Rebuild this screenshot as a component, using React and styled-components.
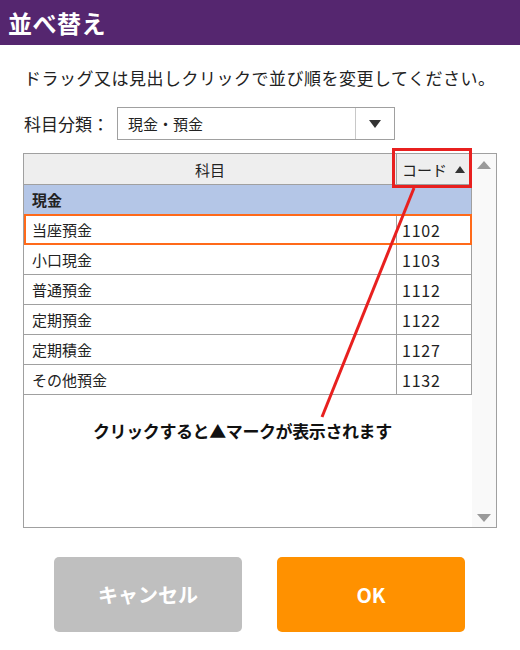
import React from "react";
import styled, { createGlobalStyle } from "styled-components";

const GlobalStyle = createGlobalStyle`
  body {
    margin: 0;
    background: #fff;
    font-family: "Noto Sans CJK JP", "Noto Sans", sans-serif;
    color: #222;
  }
`;

const Page = styled.div`
  position: relative;
  width: 520px;
  height: 650px;
  overflow: hidden;
`;

const TitleBar = styled.div`
  height: 45px;
  background: #55266f;
  display: flex;
  align-items: center;
  padding-left: 8px;

  h1 {
    margin: 0;
    color: #fff;
    font-size: 24px;
    font-weight: 700;
    line-height: 1;
    letter-spacing: 0.5px;
  }
`;

const Body = styled.div`
  padding: 0 24px 0 23px;
`;

const Lead = styled.p`
  margin: 0;
  padding: 21px 0 0 1px;
  font-size: 17px;
  line-height: 24px;
  letter-spacing: 0.5px;
  color: #222;
`;

const FilterRow = styled.div`
  display: flex;
  align-items: center;
  margin-top: 17px;
  padding-left: 1px;

  label {
    width: 93px;
    font-size: 17px;
    color: #222;
  }
`;

const Select = styled.div`
  width: 276px;
  height: 31px;
  border: 1px solid #a0a0a0;
  display: flex;
  align-items: stretch;

  span {
    flex: 1;
    display: flex;
    align-items: center;
    padding-left: 10px;
    font-size: 15px;
  }

  i {
    width: 38px;
    border-left: 1px solid #c8c8c8;
    display: flex;
    align-items: center;
    justify-content: center;
  }
`;

const ListBox = styled.div`
  margin-top: 13px;
  width: 472px;
  height: 373px;
  border: 1px solid #a0a0a0;
  display: flex;
`;

const Grid = styled.div`
  width: 448px;
  display: flex;
  flex-direction: column;
`;

const Row = styled.div`
  display: grid;
  grid-template-columns: 372px 76px;
  height: ${(p) => p.$h || 30}px;
  background: ${(p) => p.$bg || "#fff"};
  box-sizing: border-box;
  border-bottom: 1px solid #a0a0a0;
  position: relative;
`;

const Cell = styled.div`
  display: flex;
  align-items: center;
  justify-content: ${(p) => (p.$center ? "center" : "flex-start")};
  padding-left: ${(p) => (p.$center ? 0 : p.$divide ? 5 : 8)}px;
  font-size: 15px;
  font-weight: ${(p) => (p.$bold ? 700 : 400)};
  color: #222;
  border-right: ${(p) => (p.$last ? "1px solid #a0a0a0" : "none")};
  border-left: ${(p) => (p.$divide ? "1px solid #a0a0a0" : "none")};
  gap: 8px;
`;

const Code = styled.span`
  font-size: 16px;
  letter-spacing: 0.8px;
`;

const SelectedFrame = styled.div`
  position: absolute;
  left: 0;
  top: -1px;
  right: 0;
  bottom: -1px;
  border: 2px solid #ff6a1a;
  pointer-events: none;
`;

const Scroll = styled.div`
  flex: 1;
  background: #f9f9f9;
  display: flex;
  flex-direction: column;
  justify-content: space-between;
  align-items: center;
  padding: 7px 0 5px;
`;

const Tri = styled.div`
  width: 0;
  height: 0;
  border-left: ${(p) => p.$s}px solid transparent;
  border-right: ${(p) => p.$s}px solid transparent;
  ${(p) =>
    p.$down
      ? `border-top: ${p.$h}px solid ${p.$c};`
      : `border-bottom: ${p.$h}px solid ${p.$c};`}
`;

const Buttons = styled.div`
  display: flex;
  justify-content: center;
  gap: 35px;
  margin-top: 29px;
`;

const Button = styled.button`
  width: 188px;
  height: 75px;
  border: none;
  border-radius: 5px;
  background: ${(p) => (p.$primary ? "#ff9100" : "#bfbfbf")};
  color: #fff;
  font-family: "Noto Sans CJK JP", sans-serif;
  font-size: 20px;
  font-weight: 700;
`;

const Callout = styled.div`
  position: absolute;
  left: 392px;
  top: 148px;
  width: 74px;
  height: 34px;
  border: 3px solid #e8201f;
`;

const Note = styled.div`
  position: absolute;
  left: 93px;
  top: 418px;
  font-size: 17px;
  font-weight: 700;
  color: #111;
  letter-spacing: -0.4px;
`;

const Pointer = styled.svg`
  position: absolute;
  left: 0;
  top: 0;
  pointer-events: none;
`;

const rows = [
  { name: "当座預金", code: "1102", selected: true },
  { name: "小口現金", code: "1103" },
  { name: "普通預金", code: "1112" },
  { name: "定期預金", code: "1122" },
  { name: "定期積金", code: "1127" },
  { name: "その他預金", code: "1132" },
];

export default function App() {
  return (
    <Page>
      <GlobalStyle />
      <TitleBar>
        <h1>並べ替え</h1>
      </TitleBar>
      <Body>
        <Lead>ドラッグ又は見出しクリックで並び順を変更してください。</Lead>
        <FilterRow>
          <label>科目分類：</label>
          <Select>
            <span>現金・預金</span>
            <i>
              <Tri $down $s={6} $h={8} $c="#333" />
            </i>
          </Select>
        </FilterRow>
        <ListBox>
          <Grid>
            <Row $h={31} $bg="#eeeeee">
              <Cell $center>科目</Cell>
              <Cell $divide $last>
                コード
                <Tri $s={5} $h={7} $c="#333" />
              </Cell>
            </Row>
            <Row $bg="#b4c6e7">
              <Cell $bold>現金</Cell>
              <Cell $last />
            </Row>
            {rows.map((r) => (
              <Row key={r.code}>
                <Cell>{r.name}</Cell>
                <Cell $divide $last>
                  <Code>{r.code}</Code>
                </Cell>
                {r.selected && <SelectedFrame />}
              </Row>
            ))}
          </Grid>
          <Scroll>
            <Tri $s={7} $h={8} $c="#9a9a9a" />
            <Tri $down $s={7} $h={8} $c="#9a9a9a" />
          </Scroll>
        </ListBox>
        <Buttons>
          <Button>キャンセル</Button>
          <Button $primary>OK</Button>
        </Buttons>
      </Body>
      <Callout />
      <Pointer width="520" height="650">
        <line x1="414" y1="188" x2="322" y2="417" stroke="#e8201f" strokeWidth="3" />
      </Pointer>
      <Note>クリックすると▲マークが表示されます</Note>
    </Page>
  );
}
